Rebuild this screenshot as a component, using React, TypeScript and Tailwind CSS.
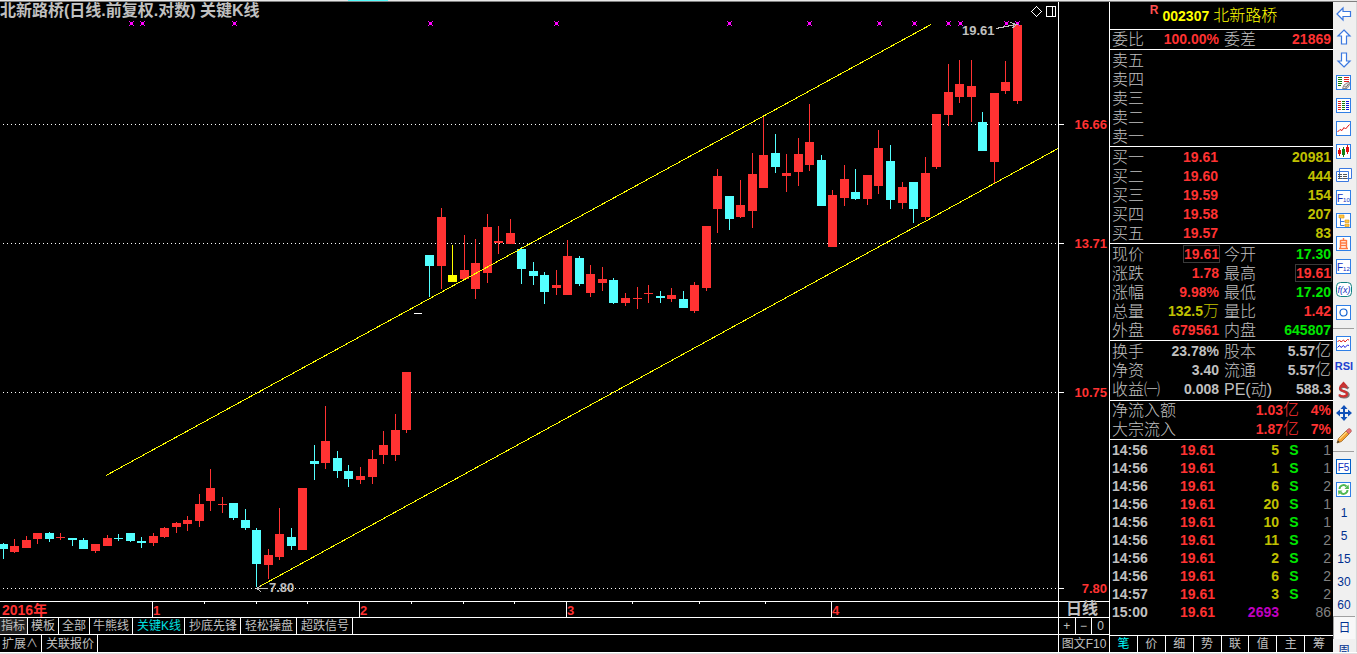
import React, { useState } from "react";

const RED = "#ff3232";
const CYAN = "#54ffff";
const YELLOW = "#ffff00";

// x, high, body top, body bottom, low, colour
type Candle = [number, number, number, number, number, string];

const candles: Candle[] = [
  [3, 543, 544, 549, 559, CYAN],
  [14, 539, 546, 552, 553, RED],
  [26, 536, 540, 548, 548, RED],
  [37, 533, 533, 539, 544, RED],
  [49, 532, 533, 539, 542, CYAN],
  [60, 533, 537, 538, 540, RED],
  [72, 538, 538, 540, 546, CYAN],
  [83, 538, 540, 549, 549, CYAN],
  [95, 544, 544, 551, 553, RED],
  [107, 535, 538, 546, 546, RED],
  [118, 534, 538, 539, 541, CYAN],
  [130, 533, 533, 541, 542, CYAN],
  [141, 537, 541, 543, 548, CYAN],
  [153, 533, 536, 543, 546, RED],
  [164, 527, 528, 537, 538, RED],
  [176, 522, 523, 527, 533, RED],
  [187, 516, 520, 524, 531, RED],
  [199, 494, 504, 521, 527, RED],
  [210, 469, 488, 501, 511, RED],
  [222, 497, 504, 505, 513, RED],
  [233, 503, 503, 518, 520, CYAN],
  [245, 509, 520, 528, 530, CYAN],
  [256, 528, 530, 564, 587, CYAN],
  [268, 549, 555, 565, 579, RED],
  [279, 508, 534, 557, 560, RED],
  [291, 528, 537, 546, 550, CYAN],
  [302, 488, 488, 550, 550, RED],
  [314, 445, 461, 464, 480, CYAN],
  [325, 406, 441, 463, 469, RED],
  [337, 451, 458, 471, 478, CYAN],
  [348, 465, 471, 479, 487, CYAN],
  [360, 467, 476, 480, 484, RED],
  [372, 450, 459, 477, 484, RED],
  [383, 431, 445, 455, 464, RED],
  [395, 414, 430, 455, 461, RED],
  [406, 372, 372, 430, 433, RED],
  [429, 255, 255, 266, 297, CYAN],
  [441, 208, 217, 266, 289, RED],
  [452, 245, 275, 282, 282, YELLOW],
  [464, 235, 270, 279, 279, RED],
  [475, 239, 263, 289, 299, RED],
  [487, 214, 227, 273, 283, RED],
  [498, 226, 241, 243, 254, RED],
  [510, 219, 233, 244, 244, RED],
  [521, 247, 249, 269, 284, CYAN],
  [533, 262, 271, 276, 285, CYAN],
  [544, 272, 275, 292, 304, CYAN],
  [556, 270, 285, 288, 295, RED],
  [567, 240, 256, 295, 295, RED],
  [579, 256, 258, 284, 286, CYAN],
  [590, 265, 274, 293, 297, RED],
  [602, 267, 279, 283, 291, RED],
  [613, 278, 280, 303, 304, CYAN],
  [625, 293, 298, 303, 306, RED],
  [637, 287, 298, 299, 309, RED],
  [648, 285, 293, 294, 303, RED],
  [660, 291, 296, 298, 303, CYAN],
  [671, 288, 295, 299, 302, RED],
  [683, 291, 299, 308, 308, CYAN],
  [694, 282, 285, 311, 313, RED],
  [706, 226, 226, 288, 291, RED],
  [717, 169, 176, 209, 233, RED],
  [729, 196, 196, 219, 230, CYAN],
  [740, 180, 205, 217, 218, RED],
  [752, 153, 174, 211, 228, RED],
  [763, 117, 155, 188, 188, RED],
  [775, 134, 153, 167, 173, CYAN],
  [786, 154, 173, 176, 192, RED],
  [798, 138, 154, 172, 186, RED],
  [809, 104, 142, 165, 171, RED],
  [821, 155, 160, 206, 206, CYAN],
  [832, 190, 195, 247, 247, RED],
  [844, 165, 179, 198, 206, RED],
  [855, 169, 192, 199, 200, CYAN],
  [867, 175, 175, 199, 205, RED],
  [878, 130, 148, 186, 194, RED],
  [890, 145, 161, 200, 209, CYAN],
  [902, 182, 187, 203, 209, RED],
  [913, 182, 182, 209, 223, CYAN],
  [925, 157, 173, 217, 220, RED],
  [936, 114, 114, 167, 169, RED],
  [948, 64, 92, 115, 126, RED],
  [959, 60, 84, 97, 103, RED],
  [971, 60, 86, 97, 122, RED],
  [982, 112, 122, 151, 151, CYAN],
  [994, 93, 93, 162, 183, RED],
  [1005, 61, 82, 91, 94, RED],
  [1017, 25, 25, 101, 104, RED],
];

const marks = [131, 142, 234, 430, 556, 729, 809, 879, 914, 948, 960, 1006, 1017];
const priceLines = [
  { y: 124, label: "16.66" },
  { y: 243, label: "13.71" },
  { y: 392, label: "10.75" },
  { y: 588, label: "7.80" },
];
const months = [
  { x: 152, label: "1" },
  { x: 359, label: "2" },
  { x: 566, label: "3" },
  { x: 831, label: "4" },
];
const weekTicks = [204, 256, 307, 411, 463, 514, 632, 699, 765];

function Chart() {
  return (
    <svg viewBox="0 2 1109 615" className="block h-full w-full" shapeRendering="crispEdges" fontFamily="'Liberation Sans', 'Noto Sans CJK SC', sans-serif">
      {priceLines.map((p) => (
        <g key={p.label}>
          <line x1={3} x2={1058} y1={p.y + 0.5} y2={p.y + 0.5} stroke="#fff" strokeDasharray="1 3" />
          <rect x={1058} y={p.y} width={6} height={1} fill="#fff" />
          <text x={1107} y={p.y + 5} textAnchor="end" fontSize={13} fontWeight="bold" fill={RED}>{p.label}</text>
        </g>
      ))}

      {candles.map(([x, high, top, bottom, low, color]) => (
        <g key={x} fill={color}>
          <rect x={x} y={high} width={1} height={low - high} />
          <rect x={x - 4} y={top} width={9} height={bottom - top} />
        </g>
      ))}
      <rect x={414} y={313} width={8} height={1} fill="#fff" />

      {/* trend channel */}
      <path d="M106 475.5 L931 24.5 M256 588.5 L1058 148.5" stroke={YELLOW} fill="none" />

      {marks.map((x) => (
        <g key={x} fill="#ff00ff">
          <rect x={x - 1} y={22} width={3} height={3} />
          <path d={`M${x - 2} 21h1v1h-1z M${x + 2} 21h1v1h-1z M${x - 2} 25h1v1h-1z M${x + 2} 25h1v1h-1z`} />
        </g>
      ))}

      <g fill="none" stroke="#c0c0c0">
        <path d="M996 28.5 L1016 24.5 M1010 22.5 L1017 24.5 L1012 28" />
        <path d="M257 588.5 H268 M261 585 L257 588.5 L261 592" />
      </g>
      <text x={962} y={35} fontSize={13} fontWeight="bold" fill="#c0c0c0">19.61</text>
      <text x={269} y={592} fontSize={13} fontWeight="bold" fill="#c0c0c0">7.80</text>

      <g fill="none" stroke="#fff">
        <path d="M1036.5 6.5 L1041.5 11.5 L1036.5 16.5 L1031.5 11.5 Z" />
        <path d="M1046.5 6.5 h9 v10 h-9 z M1052.5 6.5 v10" />
      </g>

      {/* time axis */}
      <g fill="#fff">
        <rect x={1058} y={2} width={1} height={615} />
        <rect x={0} y={601} width={1109} height={1} />
        {months.map((m) => <rect key={m.label} x={m.x} y={601} width={1} height={16} />)}
        {weekTicks.map((x) => <rect key={x} x={x} y={602} width={1} height={2} />)}
      </g>
      <g fontSize={14} fontWeight="bold" fill={RED}>
        <text x={2} y={615}>2016年</text>
        {months.map((m) => <text key={m.label} x={m.x + 1} y={615} fontSize={13}>{m.label}</text>)}
      </g>
      <text x={1066} y={614} fontSize={16} fontWeight="bold" fill="#c0c0c0">日线</text>
    </svg>
  );
}

type Cell = { label: string; value?: string; color?: string; boxed?: boolean };

const R = "text-[#ff3232]";
const G = "text-[#00e600]";
const Y = "text-[#c0c000]";
const W = "text-[#c0c0c0]";

const sells = ["卖五", "卖四", "卖三", "卖二", "卖一"];
const buys = [
  ["买一", "19.61", "20981"],
  ["买二", "19.60", "444"],
  ["买三", "19.59", "154"],
  ["买四", "19.58", "207"],
  ["买五", "19.57", "83"],
];

const quoteRows: Cell[][] = [
  [{ label: "现价", value: "19.61", color: R, boxed: true }, { label: "今开", value: "17.30", color: G }],
  [{ label: "涨跌", value: "1.78", color: R }, { label: "最高", value: "19.61", color: R, boxed: true }],
  [{ label: "涨幅", value: "9.98%", color: R }, { label: "最低", value: "17.20", color: G }],
  [{ label: "总量", value: "132.5万", color: Y }, { label: "量比", value: "1.42", color: R }],
  [{ label: "外盘", value: "679561", color: R }, { label: "内盘", value: "645807", color: G }],
];

const baseRows: Cell[][] = [
  [{ label: "换手", value: "23.78%", color: W }, { label: "股本", value: "5.57亿", color: W }],
  [{ label: "净资", value: "3.40", color: W }, { label: "流通", value: "5.57亿", color: W }],
  [{ label: "收益㈠", value: "0.008", color: W }, { label: "PE(动)", value: "588.3", color: W }],
];

const ticks = [
  ["14:56", "5", "S", "1"],
  ["14:56", "1", "S", "1"],
  ["14:56", "6", "S", "2"],
  ["14:56", "20", "S", "1"],
  ["14:56", "10", "S", "1"],
  ["14:56", "11", "S", "2"],
  ["14:56", "2", "S", "2"],
  ["14:56", "6", "S", "2"],
  ["14:57", "3", "S", "2"],
  ["15:00", "2693", "", "86"],
];

// the CJK unit after a number is drawn lighter than the digits
function Num({ value, boxed }: { value: string; boxed?: boolean }) {
  const unit = /[万亿]$/.test(value) ? value.slice(-1) : "";
  const digits = unit ? value.slice(0, -1) : value;
  return (
    <span className={boxed ? "outline outline-[#3a3a3a]" : ""}>
      <b>{digits}</b>
      {unit && <span className="text-base leading-none font-light">{unit}</span>}
    </span>
  );
}

function QuoteTable({ rows }: { rows: Cell[][] }) {
  return (
    <table className="w-full table-fixed border-collapse whitespace-nowrap">
      <colgroup>
        <col className="w-[50px]" />
        <col className="w-[59px]" />
        <col className="w-[50px]" />
        <col />
      </colgroup>
      <tbody>
        {rows.map((row, i) => (
          <tr key={i} className="h-[19px]">
            {row.map((c, j) => (
              <React.Fragment key={j}>
                <th scope="row" className={`p-0 text-left text-base leading-[19px] font-light ${j === 0 ? "pl-0.5" : "pl-[5px]"}`}>{c.label}</th>
                <td className={`p-0 text-right leading-[19px] ${j === 0 ? "" : "pr-0.5"} ${c.color || W}`}>
                  {c.value && <Num value={c.value} boxed={c.boxed} />}
                </td>
              </React.Fragment>
            ))}
          </tr>
        ))}
      </tbody>
    </table>
  );
}

function OrderTable({ rows }: { rows: string[][] }) {
  return (
    <table className="w-full table-fixed border-collapse">
      <colgroup>
        <col className="w-[50px]" />
        <col className="w-[59px]" />
        <col />
      </colgroup>
      <tbody>
        {rows.map(([label, price, volume]) => (
          <tr key={label} className="h-[19px]">
            <th scope="row" className="p-0 pl-0.5 text-left text-base leading-[19px] font-light">{label}</th>
            <td className="p-0 pr-px text-right leading-[19px] font-bold text-[#ff3232]">{price}</td>
            <td className="p-0 pr-0.5 text-right leading-[19px] font-bold text-[#c0c000]">{volume}</td>
          </tr>
        ))}
      </tbody>
    </table>
  );
}

function FlowRow({ label, amount, percent }: { label: string; amount: string; percent: string }) {
  return (
    <div className="flex h-[19px] items-center pr-0.5 pl-0.5 leading-[19px] text-[#ff3232]">
      <span className="text-base leading-[19px] font-light text-[#c0c0c0]">{label}</span>
      <span className="ml-auto"><Num value={amount} /></span>
      <b className="w-8 text-right">{percent}</b>
    </div>
  );
}

function QuotePanel() {
  const [tab, setTab] = useState("笔");
  return (
    <aside className="flex w-[224px] shrink-0 flex-col border-l border-white text-sm text-[#c0c0c0]">
      <h2 className="flex h-[27px] items-center justify-center gap-1 pr-4 text-[#ffff00]">
        <sup className="text-xs font-bold text-[#ff5050]">R</sup>
        <span><b>002307</b> <span className="text-base leading-none font-light">北新路桥</span></span>
      </h2>
      <div className="border-t border-white">
        <QuoteTable rows={[[{ label: "委比", value: "100.00%", color: R }, { label: "委差", value: "21869", color: R }]]} />
      </div>
      <div className="border-t border-white pt-px">
        <OrderTable rows={sells.map((s) => [s, "", ""])} />
      </div>
      <div className="border-t border-white pt-px">
        <OrderTable rows={buys} />
      </div>
      <div className="border-t border-white pt-px">
        <QuoteTable rows={quoteRows} />
      </div>
      <div className="border-t border-white pt-px pb-px">
        <QuoteTable rows={baseRows} />
      </div>
      <div className="border-t border-white">
        <FlowRow label="净流入额" amount="1.03亿" percent="4%" />
        <FlowRow label="大宗流入" amount="1.87亿" percent="7%" />
      </div>
      <div className="min-h-0 flex-1 border-t border-white pt-px">
        <table className="w-full table-fixed border-collapse font-bold">
          <colgroup>
            <col className="w-[50px]" />
            <col className="w-[55px]" />
            <col className="w-[64px]" />
            <col className="w-[30px]" />
            <col />
          </colgroup>
          <tbody>
            {ticks.map(([time, volume, side, count], i) => (
              <tr key={i} className="h-[18px] leading-[18px]">
                <td className="p-0 pl-0.5">{time}</td>
                <td className="p-0 text-right text-[#ff3232]">19.61</td>
                <td className={`p-0 text-right ${side ? "text-[#c0c000]" : "text-[#c000c0]"}`}>{volume}</td>
                <td className="p-0 text-center text-[#00e600]">{side}</td>
                <td className="p-0 pr-0.5 text-right font-normal text-[#808080]">{count}</td>
              </tr>
            ))}
          </tbody>
        </table>
      </div>
      <nav className="grid h-[17px] shrink-0 grid-cols-8 border-t border-white text-xs leading-4">
        {["笔", "价", "细", "势", "联", "值", "主", "筹"].map((t) => (
          <button key={t} onClick={() => setTab(t)} className={`border-r border-white last:border-r-0 ${tab === t ? "text-[#00ffff]" : ""}`}>{t}</button>
        ))}
      </nav>
    </aside>
  );
}

function Boxed({ children, stroke = "#2f7fe6" }: { children?: React.ReactNode; stroke?: string }) {
  return (
    <svg width="16" height="16" viewBox="0 0 16 16" fontFamily="'Liberation Sans', sans-serif">
      <rect x="0.5" y="0.5" width="14" height="14" fill="#fff" stroke={stroke} />
      {children}
    </svg>
  );
}

const tools = [
  { name: "后退", icon: <svg width="16" height="16" viewBox="0 0 16 16"><path d="M1 8 L7 2 V5.5 H14.5 V10.5 H7 V14 Z" fill="#fff" stroke="#3b78e0" strokeWidth="1.2" /></svg> },
  { name: "上", icon: <svg width="16" height="16" viewBox="0 0 16 16"><path d="M8 1 L14 7 H10.5 V15 H5.5 V7 H2 Z" fill="#fff" stroke="#3b78e0" strokeWidth="1.2" /></svg> },
  { name: "下", icon: <svg width="16" height="16" viewBox="0 0 16 16"><path d="M8 15 L14 9 H10.5 V1 H5.5 V9 H2 Z" fill="#fff" stroke="#3b78e0" strokeWidth="1.2" /></svg> },
  {
    name: "报价",
    icon: (
      <Boxed>
        <path d="M2 2.5h4M2 4.5h4M2 6.5h4M2 8.5h4M2 10.5h3" stroke="#108010" />
        <path d="M8 2.5h5M8 4.5h5M8 6.5h5" stroke="#e02020" />
        <path d="M6.5 13.5 L8 10 L11 8 L13.5 7.5 L13 11 L11 13.5 Z" fill="#e8e8e8" stroke="#888" />
        <path d="M8.5 11 L10 12.5 L12.5 9" fill="none" stroke="#666" />
      </Boxed>
    ),
  },
  {
    name: "行情",
    icon: (
      <Boxed>
        <path d="M2 3.5h3M2 5.5h3M2 7.5h3M2 9.5h3M2 11.5h3" stroke="#e02020" />
        <path d="M6 3.5h3M6 5.5h3M6 7.5h3M6 9.5h3M6 11.5h3" stroke="#108010" />
        <path d="M10 3.5h3M10 5.5h3M10 7.5h3M10 9.5h3M10 11.5h3" stroke="#1010e0" />
      </Boxed>
    ),
  },
  { name: "分时", icon: <Boxed><path d="M1.5 11 L4 8.5 L6 9.5 L8 6.5 L9.5 8 L13.5 3.5" stroke="#e01010" fill="none" /></Boxed> },
  {
    name: "K线",
    icon: (
      <Boxed>
        <path d="M3.5 4v8M11.5 1v9" stroke="#e01010" />
        <path d="M7.5 3v10" stroke="#108010" />
        <path d="M2 6h3v4h-3z M10 3h3v5h-3z" fill="#e01010" />
        <path d="M6 5h3v6h-3z" fill="#108010" />
      </Boxed>
    ),
  },
  {
    name: "窗口",
    icon: (
      <svg width="16" height="16" viewBox="0 0 16 16">
        <path d="M3.5 1.5h12v10h-12z M0.5 4.5h12v10h-12z" fill="#fff" stroke="#3b78e0" />
        <path d="M2 7.5h4M7 7.5h4M2 9.5h4M7 9.5h4M2 11.5h4M7 11.5h4" stroke="#555" />
      </svg>
    ),
  },
  { name: "资料", icon: <Boxed><text x="1" y="12" fontSize="10" fill="#1030c0">F<tspan fontSize="6">10</tspan></text></Boxed> },
  {
    name: "板块",
    icon: (
      <Boxed>
        <path d="M4.5 5v7.5h4M4.5 8.5h4" stroke="#3b78e0" fill="none" />
        <path d="M3 2h5v3h-5z M9 7h4v2.5h-4z M9 11h4v2.5h-4z" fill="#ffc840" stroke="#d89010" strokeWidth="0.6" />
      </Boxed>
    ),
  },
  { name: "自选", icon: <Boxed><path d="M7.5 2v2M4.5 4.5h6M4.5 4v8.5M10.5 4v8.5M4.5 7h6M4.5 9.5h6M3 12.5h9" stroke="#ff7840" strokeWidth="1.4" fill="none" /></Boxed> },
  { name: "叠加", icon: <Boxed><text x="1" y="12" fontSize="10" fill="#1030c0">F<tspan fontSize="6">12</tspan></text></Boxed> },
  {
    name: "公式",
    icon: (
      <svg width="16" height="16" viewBox="0 0 16 16">
        <rect x="0.5" y="0.5" width="15" height="14" rx="4" fill="#fff" stroke="#108080" />
        <text x="8" y="11" textAnchor="middle" fontSize="9" fontStyle="italic" fill="#1030c0">f(x)</text>
      </svg>
    ),
  },
  { name: "圆", icon: <Boxed><circle cx="7.5" cy="7.5" r="3.5" fill="none" stroke="#1060d0" strokeWidth="1.2" /></Boxed> },
];

const drawTools = [
  {
    name: "指标线",
    icon: (
      <Boxed>
        <path d="M1.5 6 L3.5 4 L5 6 L7.5 4 L9 6 L11.5 3.5 L13 4" stroke="#e02020" fill="none" />
        <path d="M1.5 11.5 L3.5 9.5 L5 11.5 L7.5 9.5 L9 11.5 L11.5 9 L13 9.5" stroke="#2020e0" fill="none" />
      </Boxed>
    ),
  },
  { name: "RSI", icon: <span className="text-[11px] font-bold text-[#2040d0]">RSI</span> },
  {
    name: "资金",
    icon: (
      <svg width="16" height="18" viewBox="0 0 16 18">
        <path d="M3 5.5 L7.5 0.5 L12 5.5 Z" fill="#c83030" />
        <path d="M12.5 7.5 C10 5 4 5 4.5 8.5 C5 11 12.5 10 12.5 13.5 C12.5 17 5 17 3.5 14.5" fill="none" stroke="#777" strokeWidth="2.5" />
        <path d="M11 7 C9 4.5 3.5 4.5 4 8 C4.5 10.5 11 9.5 11 13 C11 16 4.5 16 3 13.5" fill="none" stroke="#d03030" strokeWidth="2.2" />
      </svg>
    ),
  },
  {
    name: "移动",
    icon: (
      <svg width="16" height="16" viewBox="0 0 16 16" fill="#1050b8">
        <path d="M8 0 L11.5 4 H4.5 Z M8 16 L4.5 12 H11.5 Z M0 8 L4 4.5 V11.5 Z M16 8 L12 11.5 V4.5 Z M7 4h2v3h3v2h-3v3h-2v-3h-3v-2h3z" />
      </svg>
    ),
  },
  {
    name: "画线",
    icon: (
      <svg width="16" height="16" viewBox="0 0 16 16">
        <path d="M1 15 L2.5 10.5 L10 3 L13 6 L5.5 13.5 Z" fill="#f5a030" stroke="#9a6420" strokeWidth="0.8" />
        <path d="M3.5 11 L10.8 3.8" stroke="#ffd880" strokeWidth="1.2" />
        <path d="M10 3 L12 1 Q13.5 0 14.8 1.5 Q16 3 15 4 L13 6 Z" fill="#e87070" stroke="#a05050" strokeWidth="0.6" />
        <path d="M1 15 L2 12.5 L3.5 14 Z" fill="#333" />
      </svg>
    ),
  },
];

const periodTools = [
  { name: "F5", icon: <Boxed stroke="#0060c8"><text x="7.5" y="12" textAnchor="middle" fontSize="10" fill="#1030c0">F5</text></Boxed> },
  {
    name: "刷新",
    icon: (
      <Boxed>
        <path d="M3.5 7 A4 4 0 0 1 10.5 4.5 M11.5 8 A4 4 0 0 1 4.5 10.5" fill="none" stroke="#50b850" strokeWidth="2" />
        <path d="M8.5 7 L13 7 L12.5 2.5 Z M6.5 8.5 L2 8.5 L2.5 13 Z" fill="#50b850" />
      </Boxed>
    ),
  },
];

function ToolButton({ name, children, active }: { name: string; children: React.ReactNode; active?: boolean }) {
  return (
    <button aria-label={name} className={`flex h-[23px] w-full shrink-0 items-center justify-center ${active ? "border-t border-l border-[#a0a0a0] bg-[#f8f8f8]" : ""}`}>
      {children}
    </button>
  );
}

function Divider() {
  return (
    <div className="flex h-2 w-full shrink-0 items-center pr-px">
      <div className="h-px w-full bg-[#a0a0a0]" />
    </div>
  );
}

function Toolbar() {
  return (
    <nav className="flex w-6 shrink-0 flex-col items-center overflow-hidden border-r border-[#d8d8d8] bg-[#f0f0f0] pr-px text-sm text-[#003090]">
      {tools.map((t) => <ToolButton key={t.name} name={t.name}>{t.icon}</ToolButton>)}
      <Divider />
      {drawTools.map((t) => <ToolButton key={t.name} name={t.name}>{t.icon}</ToolButton>)}
      <Divider />
      {periodTools.map((t) => <ToolButton key={t.name} name={t.name}>{t.icon}</ToolButton>)}
      {["1", "5", "15", "30", "60", "日", "周"].map((p) => (
        <ToolButton key={p} name={p} active={p === "日"}>
          <span className="text-xs">{p}</span>
        </ToolButton>
      ))}
    </nav>
  );
}

const indicatorTabs = ["指标", "模板", "全部", "牛熊线", "关键K线", "抄底先锋", "轻松操盘", "超跌信号"];

export default function App() {
  const [indicator, setIndicator] = useState("关键K线");

  return (
    <div className="flex h-screen flex-col overflow-hidden bg-black font-['Liberation_Sans','Noto_Sans_CJK_SC',sans-serif]">
      <div className="h-0.5 shrink-0 border-t border-b border-t-[#e8e8e8] border-b-[#808080]">
        <div className="relative -top-px ml-[348px] h-px w-10 bg-[#54ffff]" />
      </div>
      <div className="flex min-h-0 flex-1">
        <main className="flex min-w-0 flex-1 flex-col text-xs text-[#c0c0c0]">
          <div className="relative min-h-0 flex-1">
            <Chart />
            <h1 className="absolute top-0 left-0 text-base leading-[18px] font-bold whitespace-nowrap">北新路桥(日线.前复权.对数) 关键K线</h1>
          </div>

          <div className="flex h-[17px] shrink-0 border-t border-white leading-4">
            {indicatorTabs.map((t) => (
              <button
                key={t}
                onClick={() => setIndicator(t)}
                className={`border-r border-white pr-[3px] first:bg-[#202020] first:pr-0.5 first:pl-px ${t.length > 3 ? "pl-1" : "pl-[3px]"} ${t === indicator ? "text-[#00e0e0]" : ""}`}
              >
                {t}
              </button>
            ))}
            <div className="ml-auto grid w-[51px] grid-cols-3 border-l border-white">
              <button className="border-r border-white">+</button>
              <button className="border-r border-white">−</button>
              <button>0</button>
            </div>
          </div>

          <div className="flex h-[18px] shrink-0 border-t border-white leading-4">
            <button className="border-r border-white pr-[3px] pl-0.5">扩展∧</button>
            <button className="border-r border-white pr-[3px] pl-1">关联报价</button>
            <button className="ml-auto w-[51px] border-l border-white whitespace-nowrap">图文F10</button>
          </div>
        </main>
        <QuotePanel />
        <Toolbar />
      </div>
      <div className="h-0.5 shrink-0 border-t border-white bg-[#e0e0e0]" />
    </div>
  );
}
